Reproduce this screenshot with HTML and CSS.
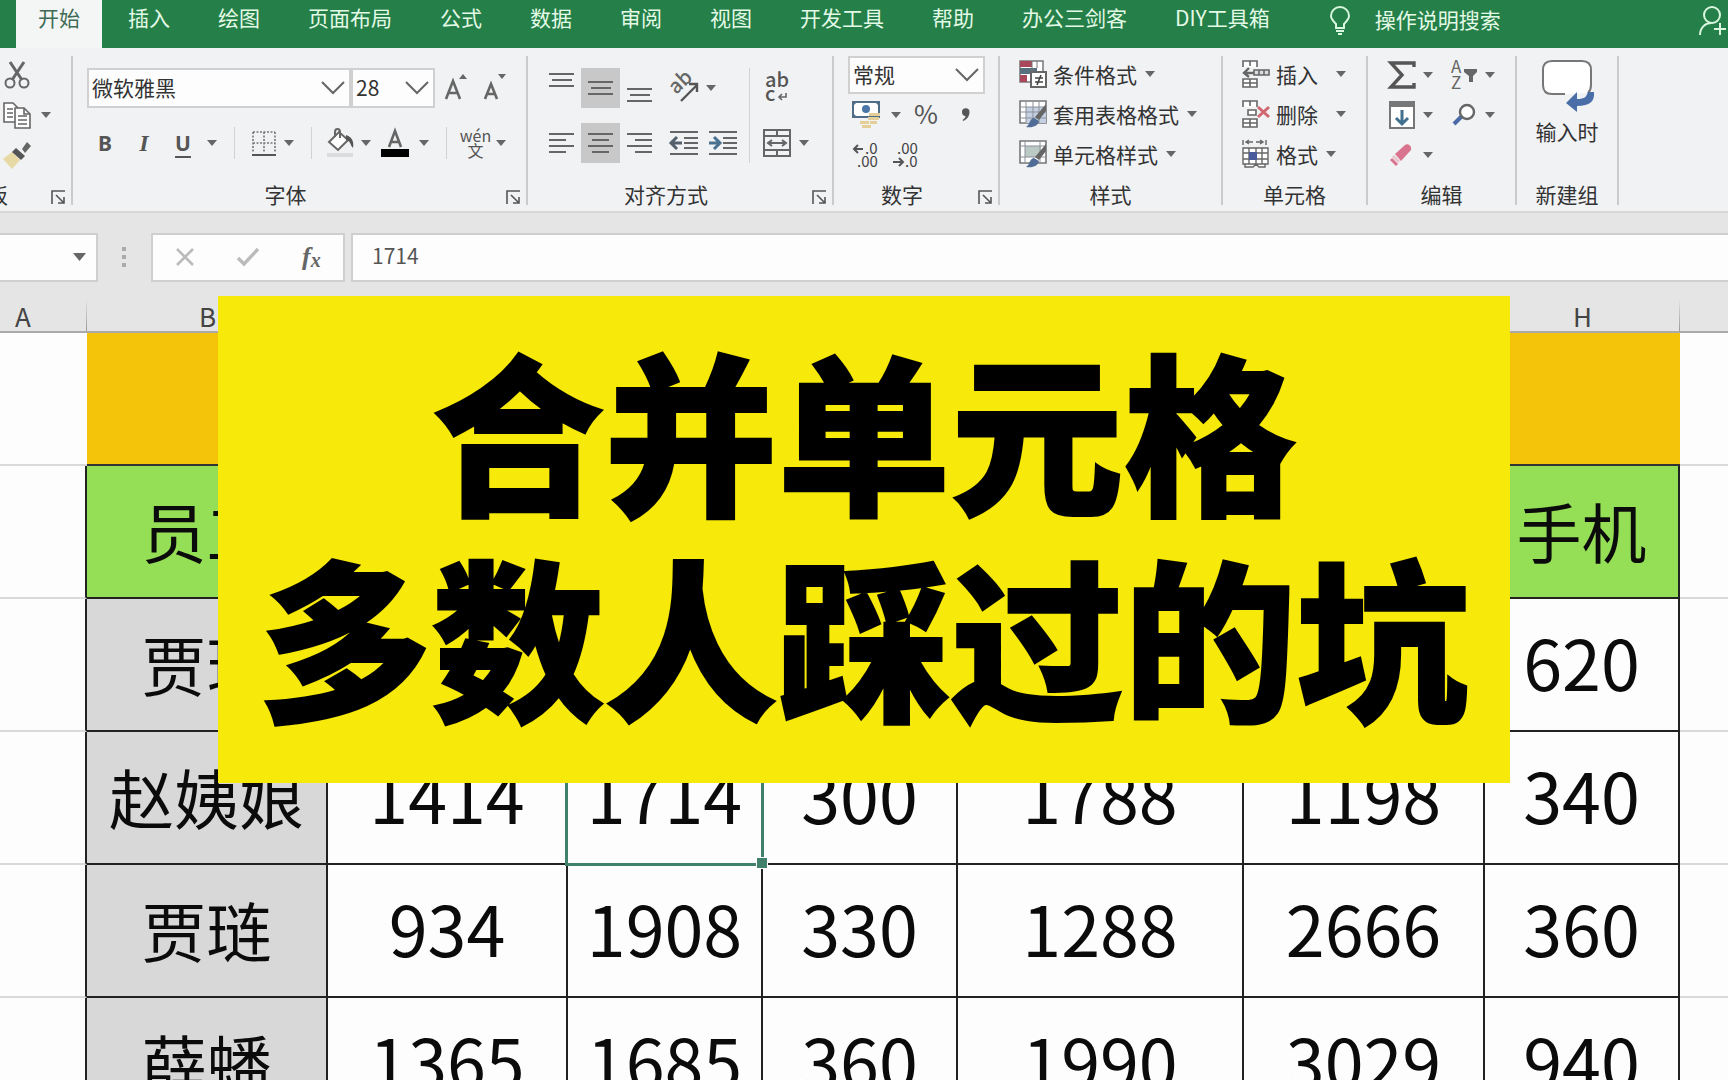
FILE: index.html
```html
<!DOCTYPE html>
<html lang="zh-CN">
<head>
<meta charset="utf-8">
<meta name="viewport" content="width=device-width, initial-scale=1">
<title>合并单元格</title>
<link rel="stylesheet" href="styles.css">
</head>
<body>
<svg class="defs" aria-hidden="true">
  <symbol id="caret" viewBox="0 0 10 6"><path d="M0 0h10L5 6z" fill="#666"/></symbol>
  <symbol id="launch" viewBox="0 0 15 15"><path d="M1 14V1h13M5 5l8 8M13 7v6H7" fill="none" stroke="#555" stroke-width="1.6"/></symbol>
  <symbol id="brush" viewBox="0 0 28 28"><path d="M27 4v7l-7 9-4-3z" fill="#666"/><path d="M15 18l5 3c-1 5-6 7-13 6 4-2 3-8 8-9z" fill="#4f6d96"/></symbol>
</svg>
<div class="app">
  <header class="tabs">
    <nav class="tablist">
      <button class="tab active">开始</button>
      <button class="tab">插入</button>
      <button class="tab">绘图</button>
      <button class="tab">页面布局</button>
      <button class="tab">公式</button>
      <button class="tab">数据</button>
      <button class="tab">审阅</button>
      <button class="tab">视图</button>
      <button class="tab">开发工具</button>
      <button class="tab">帮助</button>
      <button class="tab">办公三剑客</button>
      <button class="tab">DIY工具箱</button>
    </nav>
    <button class="tellme">
      <svg width="22" height="30" viewBox="0 0 22 30" fill="none" stroke="#d9f7df" stroke-width="2"><path d="M7 22v-4C4 15 2 13 2 10a9 9 0 0 1 18 0c0 3-2 5-5 8v4zM7 25h8M9 28h4"/></svg>
      <span>操作说明搜索</span>
    </button>
    <button class="share" aria-label="共享">
      <svg width="30" height="30" viewBox="0 0 30 30" fill="none" stroke="#d9f7df" stroke-width="2"><circle cx="14" cy="9" r="8"/><path d="M2 29c0-7 5-12 11-12M22 17v12M16 23h12"/></svg>
    </button>
  </header>

  <div class="ribbon">
    <section class="group clipboard">
      <div class="body three">
        <div class="row"><button class="ic" aria-label="剪切"><svg width="26" height="28" viewBox="0 0 26 28" fill="none" stroke="#666" stroke-width="2"><path d="M6 1l12 18M20 1L8 19" stroke-width="3"/><circle cx="6" cy="22" r="4.5"/><circle cx="20" cy="22" r="4.5"/></svg></button></div>
        <div class="row"><button class="ic" aria-label="复制"><svg width="28" height="28" viewBox="0 0 28 28" fill="#fff" stroke="#666" stroke-width="1.6"><path d="M1 2h9l5 5v14H1z"/><path d="M4 8h6M4 12h6M4 16h6"/><path d="M12 7h9l6 6v14H12z"/><path d="M21 7v6h6M15 15h9M15 19h9M15 23h9" fill="none"/></svg></button><button class="dd" aria-label="复制选项"><svg><use href="#caret"/></svg></button></div>
        <div class="row"><button class="ic" aria-label="格式刷"><svg width="28" height="28" viewBox="0 0 28 28"><path d="M9 11l8 8-8 9-9-10z" fill="#e6d9a3"/><path d="M13 7l9 8-4 4-9-8z" fill="#555"/><path d="M19 8l5-7 4 4-6 7z" fill="#666"/></svg></button></div>
      </div>
      <div class="foot"><span>剪贴板</span><button class="launch" aria-label="剪贴板设置"><svg><use href="#launch"/></svg></button></div>
    </section>

    <section class="group font">
      <div class="body two">
        <div class="row fields">
          <select class="field family" aria-label="字体"><option>微软雅黑</option></select>
          <select class="field size" aria-label="字号"><option>28</option></select>
          <button class="ic" aria-label="增大字号"><svg width="24" height="28" viewBox="0 0 24 28"><path d="M2 25L9 7l7 18M5 19h8" fill="none" stroke="#666" stroke-width="2.6"/><path d="M15 5h8l-4-5z" fill="#666"/></svg></button>
          <button class="ic" aria-label="减小字号"><svg width="24" height="28" viewBox="0 0 24 28"><path d="M2 25L8 10l6 15M4 20h8" fill="none" stroke="#666" stroke-width="2.6"/><path d="M15 0h8l-4 5z" fill="#666"/></svg></button>
        </div>
        <div class="row">
          <button class="ic glyph bold">B</button>
          <button class="ic glyph italic">I</button>
          <button class="ic glyph under">U</button>
          <button class="dd" aria-label="下划线选项"><svg><use href="#caret"/></svg></button>
          <i class="sep"></i>
          <button class="ic slim" aria-label="边框"><svg width="26" height="26" viewBox="0 0 26 26" fill="none" stroke="#777" stroke-width="1.6"><path d="M2 2h22M2 13h22M2 2v21M13 2v21M24 2v21" stroke-dasharray="2 1.5"/><path d="M1 25h24" stroke="#555" stroke-width="2"/></svg></button>
          <button class="dd" aria-label="边框选项"><svg><use href="#caret"/></svg></button>
          <i class="sep"></i>
          <button class="ic slim" aria-label="填充颜色"><svg width="28" height="30" viewBox="0 0 28 30"><path d="M2 14L12 4l9 8-10 10z" fill="#fff" stroke="#666" stroke-width="2"/><path d="M8 9V4c0-4 5-4 5 0v6" fill="none" stroke="#666" stroke-width="2"/><path d="M19 7c7 2 8 8 7 13-3-3-2-7-7-8z" fill="#555"/><path d="M0 25h26v4H0z" fill="#dcdcdc"/></svg></button>
          <button class="dd" aria-label="填充选项"><svg><use href="#caret"/></svg></button>
          <button class="ic" aria-label="字体颜色"><svg width="30" height="30" viewBox="0 0 30 30"><path d="M9 19L15 3l6 16M11 14h8" fill="none" stroke="#666" stroke-width="2.6"/><path d="M1 21h28v8H1z"/></svg></button>
          <button class="dd" aria-label="颜色选项"><svg><use href="#caret"/></svg></button>
          <i class="sep"></i>
          <button class="ic slim pinyin"><span>wén</span><span>文</span></button>
          <button class="dd" aria-label="拼音选项"><svg><use href="#caret"/></svg></button>
        </div>
      </div>
      <div class="foot"><span>字体</span><button class="launch" aria-label="字体设置"><svg><use href="#launch"/></svg></button></div>
    </section>

    <section class="group align">
      <div class="body split">
        <div class="stack">
          <div class="row">
            <button class="ic" aria-label="顶端对齐"><svg width="26" height="30" viewBox="0 0 26 30" stroke="#666" stroke-width="1.8"><path d="M0 1h25M3 7h20M0 13h25"/></svg></button>
            <button class="ic on" aria-label="垂直居中"><svg width="26" height="16" viewBox="0 0 26 16" stroke="#666" stroke-width="1.8"><path d="M0 2h25M3 8h20M0 14h25"/></svg></button>
            <button class="ic" aria-label="底端对齐"><svg width="26" height="30" viewBox="0 0 26 30" stroke="#666" stroke-width="1.8"><path d="M0 16h25M3 22h20M0 28h25"/></svg></button>
            <button class="ic gap" aria-label="方向"><svg width="32" height="32" viewBox="0 0 32 32"><text x="8" y="23" transform="rotate(-43 8 23)" font-family="Noto Sans CJK SC, sans-serif" font-size="20" font-weight="500" fill="#666">ab</text><path d="M13 29L29 13M21 12l8 0 0 8" fill="none" stroke="#555" stroke-width="2.4"/></svg></button>
            <button class="dd" aria-label="方向选项"><svg><use href="#caret"/></svg></button>
          </div>
          <div class="row">
            <button class="ic" aria-label="左对齐"><svg width="26" height="22" viewBox="0 0 26 22" stroke="#666" stroke-width="1.8"><path d="M0 2h25M0 8h17M0 14h25M0 20h17"/></svg></button>
            <button class="ic on" aria-label="居中"><svg width="26" height="22" viewBox="0 0 26 22" stroke="#666" stroke-width="1.8"><path d="M0 2h25M4 8h17M0 14h25M4 20h17"/></svg></button>
            <button class="ic" aria-label="右对齐"><svg width="26" height="22" viewBox="0 0 26 22" stroke="#666" stroke-width="1.8"><path d="M0 2h25M8 8h17M0 14h25M8 20h17"/></svg></button>
            <button class="ic gap" aria-label="减少缩进"><svg width="30" height="26" viewBox="0 0 30 26" fill="none" stroke="#666" stroke-width="1.8"><path d="M1 2h28M15 8h14M15 13h14M15 18h14M1 24h28"/><path d="M13 13H3M8 7l-6 6 6 6" stroke="#55606c" stroke-width="3"/></svg></button>
            <button class="ic" aria-label="增加缩进"><svg width="30" height="26" viewBox="0 0 30 26" fill="none" stroke="#666" stroke-width="1.8"><path d="M1 2h28M15 8h14M15 13h14M15 18h14M1 24h28"/><path d="M1 13h10M6 7l6 6-6 6" stroke="#4a718f" stroke-width="3"/></svg></button>
          </div>
        </div>
        <i class="sep tall"></i>
        <div class="stack">
          <div class="row"><button class="ic" aria-label="自动换行"><svg width="26" height="32" viewBox="0 0 26 32"><text x="1" y="15" font-family="Noto Sans CJK SC, sans-serif" font-size="20" font-weight="500" fill="#555">ab</text><text x="1" y="29" font-family="Noto Sans CJK SC, sans-serif" font-size="20" font-weight="500" fill="#555">c</text><path d="M22 21v4h-7M18 22l-3 3 3 3" fill="none" stroke="#666" stroke-width="1.6"/></svg></button></div>
          <div class="row"><button class="ic" aria-label="合并后居中"><svg width="28" height="28" viewBox="0 0 28 28" fill="none" stroke="#666" stroke-width="2"><path d="M1 1h26v26H1zM1 7h26M1 21h26M14 1v6M14 21v6M5 14h18M9 11l-4 3 4 3M19 11l4 3-4 3"/></svg></button><button class="dd" aria-label="合并选项"><svg><use href="#caret"/></svg></button></div>
        </div>
      </div>
      <div class="foot"><span>对齐方式</span><button class="launch" aria-label="对齐设置"><svg><use href="#launch"/></svg></button></div>
    </section>

    <section class="group number">
      <div class="body three">
        <div class="row"><select class="field format" aria-label="数字格式"><option>常规</option></select></div>
        <div class="row">
          <button class="ic" aria-label="会计数字格式"><svg width="30" height="28" viewBox="0 0 30 28"><path d="M2 1h26v15H2z" fill="#fff" stroke="#4f6d86" stroke-width="2"/><path d="M1 0h6L1 6zM29 0v6l-6-6zM1 17v-6l6 6z" fill="#4f6d86"/><circle cx="15" cy="8" r="4" fill="#4a76a8"/><path d="M18 12h11v3H18zM17 16h11v3H17zM9 20h9v3H9zM11 24h9v3h-9zM19 20h7v3h-7z" fill="#e3cf97"/></svg></button>
          <button class="dd" aria-label="货币选项"><svg><use href="#caret"/></svg></button>
          <button class="ic pct">%</button>
          <button class="ic" aria-label="千位分隔样式"><svg width="10" height="14" viewBox="0 0 10 14"><path d="M1 4a3.500 3.500 0 0 1 7.500 0c0 4-2 7-6 9l-1-1c2-1 3-3 3-4C2 8 1 6 1 4z" fill="#555"/></svg></button>
        </div>
        <div class="row">
          <button class="ic" aria-label="增加小数位数"><svg width="30" height="26" viewBox="0 0 30 26" font-family="Noto Sans CJK SC, sans-serif" font-size="15" fill="#444"><text x="14" y="12">.0</text><text x="6" y="25">.00</text><path d="M12 7H3M7 3L3 7l4 4" fill="none" stroke="#555" stroke-width="2"/></svg></button>
          <button class="ic" aria-label="减少小数位数"><svg width="30" height="26" viewBox="0 0 30 26" font-family="Noto Sans CJK SC, sans-serif" font-size="15" fill="#444"><text x="6" y="12">.00</text><text x="14" y="25">.0</text><path d="M2 20h10M8 16l4 4-4 4" fill="none" stroke="#555" stroke-width="2"/></svg></button>
        </div>
      </div>
      <div class="foot"><span>数字</span><button class="launch" aria-label="数字设置"><svg><use href="#launch"/></svg></button></div>
    </section>

    <section class="group styles">
      <div class="body three">
        <button class="cmd"><svg class="icon" width="28" height="28" viewBox="0 0 28 28"><path d="M1 1h23v21H1z" fill="#fff" stroke="#777" stroke-width="1.5"/><path d="M1 1h12v6H1zM1 15h7v7H1z" fill="#a8485a"/><path d="M1 8h17v6H1z" fill="#56707f"/><path d="M13 1v13M18 1v7" stroke="#777"/><path d="M12 12h15v15H12z" fill="#fff" stroke="#666" stroke-width="2"/><path d="M16 18h8M16 22h8M22 15l-4 10" stroke="#444" stroke-width="1.6"/></svg>条件格式<svg class="caret"><use href="#caret"/></svg></button>
        <button class="cmd"><svg class="icon" width="28" height="28" viewBox="0 0 28 28"><path d="M1 1h26v22H1z" fill="#fff" stroke="#777" stroke-width="1.6"/><path d="M7 7h20v16H7z" fill="#c5d0e4"/><path d="M7 1v22M14 1v22M20 1v22M1 7h26M1 12h26M1 18h26" stroke="#8b8f98"/><use href="#brush"/></svg>套用表格格式<svg class="caret"><use href="#caret"/></svg></button>
        <button class="cmd"><svg class="icon" width="28" height="28" viewBox="0 0 28 28"><path d="M1 1h26v22H1z" fill="#fff" stroke="#777" stroke-width="1.6"/><path d="M6 6h16v11H6z" fill="#bccac6"/><path d="M6 1v22M1 6h26M1 17h26M21 1v22" stroke="#8b8f98"/><use href="#brush"/></svg>单元格样式<svg class="caret"><use href="#caret"/></svg></button>
      </div>
      <div class="foot"><span>样式</span></div>
    </section>

    <section class="group cells">
      <div class="body three">
        <button class="cmd wide"><svg class="icon" width="28" height="28" viewBox="0 0 28 28" fill="#fff" stroke="#666" stroke-width="1.6"><path d="M1 7V1h14v6M8 1v5M1 19h14v8H1zM8 19v8M1 23h14"/><path d="M12 10h15v5H12zM17 10v5M22 10v5" fill="#ddd"/><path d="M12 13H3M7 8l-5 5 5 4" fill="none" stroke-width="2.4"/></svg>插入<svg class="caret"><use href="#caret"/></svg></button>
        <button class="cmd wide"><svg class="icon" width="28" height="28" viewBox="0 0 28 28" fill="#fff" stroke="#666" stroke-width="1.6"><path d="M1 7V1h14v6M8 1v5M1 19h14v8H1zM8 19v8M1 23h14M6 10h8v5H6z"/><path d="M16 7l11 10M27 7L16 17" stroke="#cf6870" stroke-width="3"/></svg>删除<svg class="caret"><use href="#caret"/></svg></button>
        <button class="cmd"><svg class="icon" width="28" height="28" viewBox="0 0 28 28" fill="none" stroke="#666" stroke-width="1.4"><path d="M1 0v5M24 0v5M5 2h6M14 2h6M7 0L4 2l3 2M18 0l3 2-3 2"/><path d="M1 8h25v16H1zM1 13h25M1 19h25M7 8v16M14 8v16M20 8v16M3 24v3h8l3-3 3 3h6v-3" fill="#fff"/><path d="M7 12h8v8H7z" fill="#4a5c9c" stroke="none"/></svg>格式<svg class="caret"><use href="#caret"/></svg></button>
      </div>
      <div class="foot"><span>单元格</span></div>
    </section>

    <section class="group edit">
      <div class="body three">
        <div class="row">
          <button class="ic" aria-label="自动求和"><svg width="28" height="28" viewBox="0 0 28 28"><path d="M26 6V2H3l11 12L3 26h23v-4" fill="none" stroke="#555" stroke-width="3.400"/></svg></button><button class="dd" aria-label="求和选项"><svg><use href="#caret"/></svg></button>
          <button class="ic gap" aria-label="排序和筛选"><svg width="28" height="30" viewBox="0 0 28 30" font-family="Noto Sans CJK SC, sans-serif" font-size="17" fill="#666"><text x="1" y="13">A</text><text x="1" y="29">Z</text><path d="M14 9h13v3l-4 4v6h-4v-6l-5-4z"/></svg></button><button class="dd" aria-label="排序选项"><svg><use href="#caret"/></svg></button>
        </div>
        <div class="row">
          <button class="ic" aria-label="填充"><svg width="26" height="28" viewBox="0 0 26 28"><path d="M1 1h24v26H1z" fill="#fff" stroke="#777" stroke-width="2"/><path d="M0 0h26v6H0z" fill="#777"/><path d="M13 9v14M7 17l6 6 6-6" fill="none" stroke="#426f8d" stroke-width="3"/></svg></button><button class="dd" aria-label="填充选项"><svg><use href="#caret"/></svg></button>
          <button class="ic gap" aria-label="查找和选择"><svg width="26" height="24" viewBox="0 0 26 24" fill="none"><path d="M11 13l-8 8" stroke="#4a6aa8" stroke-width="4"/><circle cx="16" cy="9" r="7" fill="#fff" stroke="#666" stroke-width="2.400"/></svg></button><button class="dd" aria-label="查找选项"><svg><use href="#caret"/></svg></button>
        </div>
        <div class="row">
          <button class="ic" aria-label="清除"><svg width="26" height="24" viewBox="0 0 26 24"><path d="M6 11L16 2c3-2 7 1 6 5l-10 11z" fill="#d9748f"/><path d="M4 13l6 6" stroke="#e9c6cf" stroke-width="3"/><path d="M2 16l6 6" stroke="#d9748f" stroke-width="3"/></svg></button><button class="dd" aria-label="清除选项"><svg><use href="#caret"/></svg></button>
        </div>
      </div>
      <div class="foot"><span>编辑</span></div>
    </section>

    <section class="group custom">
      <div class="body">
        <button class="big"><svg width="56" height="54" viewBox="0 0 56 54"><path d="M26 35H13c-6 0-9-3-9-9V11c0-6 3-9 9-9h30c6 0 9 3 9 9v15c0 4-1 6-3 8" fill="#fff" stroke="#777" stroke-width="2"/><path d="M27 44l11-11v7c8 0 9-2 11-7h6c1 9-4 14-17 14v6z" fill="#4a6ea8"/></svg><span>输入时</span></button>
      </div>
      <div class="foot"><span>新建组</span></div>
    </section>
  </div>

  <div class="formula">
    <button class="namebox" aria-label="名称框"><svg><use href="#caret"/></svg></button>
    <svg class="dots" width="4" height="20" viewBox="0 0 4 20" fill="#aaa"><path d="M0 0h4v4H0zM0 8h4v4H0zM0 16h4v4H0z"/></svg>
    <div class="fx">
      <button aria-label="取消"><svg width="20" height="20" viewBox="0 0 20 20"><path d="M2 2l16 16M18 2L2 18" stroke="#bbb" stroke-width="2.600"/></svg></button>
      <button aria-label="输入"><svg width="24" height="20" viewBox="0 0 24 20"><path d="M2 11l6 6L22 2" fill="none" stroke="#bbb" stroke-width="3.400"/></svg></button>
      <button class="fn"><i>f</i><i class="sub">x</i></button>
    </div>
    <input class="value" aria-label="编辑栏" value="1714">
  </div>

  <main class="sheet">
    <table class="grid">
      <colgroup><col class="ca"><col class="c241"><col class="c240"><col class="c195"><col class="c195"><col class="c286"><col class="c241"><col class="c195"><col></colgroup>
      <thead><tr><th>A</th><th>B</th><th></th><th></th><th></th><th></th><th></th><th>H</th><th class="end"></th></tr></thead>
      <tbody>
        <tr><td></td><td class="title" colspan="7"></td><td></td></tr>
        <tr class="head"><td></td><td class="b name">员工</td><td class="b"></td><td class="b"></td><td class="b"></td><td class="b"></td><td class="b"></td><td class="b">手机</td><td></td></tr>
        <tr><td></td><td class="b name">贾珍</td><td class="b n"></td><td class="b n"></td><td class="b n"></td><td class="b n"></td><td class="b n"></td><td class="b n">620</td><td></td></tr>
        <tr><td></td><td class="b name">赵姨娘</td><td class="b n">1414</td><td class="b n selected">1714</td><td class="b n">300</td><td class="b n">1788</td><td class="b n">1198</td><td class="b n">340</td><td></td></tr>
        <tr><td></td><td class="b name">贾琏</td><td class="b n">934</td><td class="b n">1908</td><td class="b n">330</td><td class="b n">1288</td><td class="b n">2666</td><td class="b n">360</td><td></td></tr>
        <tr><td></td><td class="b name">薛蟠</td><td class="b n">1365</td><td class="b n">1685</td><td class="b n">360</td><td class="b n">1990</td><td class="b n">3029</td><td class="b n">940</td><td></td></tr>
      </tbody>
    </table>
  </main>

  <h1 class="banner"><span>合并单元格</span><span>多数人踩过的坑</span></h1>
</div>
</body>
</html>
```
FILE: styles.css
```css
* { box-sizing: border-box; }
body {
  margin: 0;
  font-family: "Noto Sans CJK SC", "Noto Sans", sans-serif;
  font-size: 21px;
  line-height: 24px;
  color: #333;
  background: #fdfdfd;
}
button, select, input { font: inherit; color: inherit; border: 0; padding: 0; margin: 0; background: none; }
svg { display: block; flex: none; overflow: visible; }
.defs { display: none; }
.app { position: relative; display: flex; flex-direction: column; height: 100vh; overflow: hidden; }

/* tab strip */
.tabs { display: flex; flex: none; height: 48px; padding-left: 16px; background: #257f48; color: #e3fae7; overflow: hidden; }
.tablist { display: flex; gap: 4px; }
.tab { padding: 0 22px 14px; white-space: nowrap; }
.tab.active { background: #f3f6f5; color: #3f6b55; }
.tellme { display: flex; align-items: center; gap: 24px; margin-left: 37px; padding-bottom: 6px; white-space: nowrap; }
.tellme span { padding-bottom: 4px; }
.share { margin-left: auto; padding-bottom: 6px; }

/* ribbon */
.ribbon { display: flex; flex: none; height: 165px; padding: 8px 0 6px; background: #f1f2f3; border-bottom: 2px solid #d6d6d6; overflow: hidden; }
.group { display: flex; flex: none; flex-direction: column; border-right: 2px solid #cbcbcb; }
.body { height: 128px; }
.foot { display: flex; height: 22px; align-items: center; line-height: 22px; }
.foot span { flex: 1; text-align: center; white-space: nowrap; }
.launch { width: 28px; padding-left: 8px; padding-top: 6px; }
.launch svg { width: 15px; height: 15px; }
.clipboard { width: 163px; margin-left: -90px; }
.font { width: 455px; }
.align { width: 306px; }
.number { width: 166px; }
.styles { width: 223px; }
.cells { width: 145px; }
.edit { width: 149px; }
.custom { width: 102px; }

.row { display: flex; align-items: center; height: 38px; }
.three { display: flex; flex-direction: column; gap: 2px; }
.two, .stack { display: flex; flex-direction: column; gap: 15px; }
.two, .split { padding-top: 12px; }
.two .row, .stack .row { height: 40px; }
.split { display: flex; }
.clipboard .body { padding-left: 89px; }
.clipboard .row { gap: 3px; }
.font .body { padding-left: 14px; }
.font .row { gap: 3px; }
.align .body { padding-left: 14px; }
.number .body { padding-left: 14px; }
.number .row { gap: 4px; }
.styles .body { padding-left: 19px; }
.cells .body { padding-left: 19px; }
.edit .body { padding-left: 16px; }

.ic { display: flex; width: 36px; height: 38px; align-items: center; justify-content: center; }
.slim { width: 29px; }
.align .ic { width: 39px; height: 40px; }
.align .gap { margin-left: 5px; }
.edit .gap { margin-left: 10px; }
.on { background: #c8c8c8; }
.dd { display: flex; width: 16px; height: 38px; align-items: center; justify-content: center; }
.dd svg, .caret, .namebox svg { width: 10px; height: 6px; }
.sep { flex: none; width: 1px; height: 32px; margin: 0 11px; background: #d2d2d2; }
.sep.tall { height: 95px; margin: 0 7px; }
.glyph { font-family: "Noto Sans", sans-serif; font-weight: 700; color: #555; }
.italic { font-family: "Liberation Serif", serif; font-size: 24px; font-style: italic; }
.under { text-decoration: underline; text-underline-offset: 5px; text-decoration-thickness: 2px; }
.pinyin { flex-direction: column; font-size: 16px; line-height: 15px; color: #555; }
.pct { font-size: 26px; padding-bottom: 4px; color: #555; }

.field {
  height: 40px;
  padding-left: 3px;
  padding-bottom: 3px;
  border: 2px solid #d0d0d0;
  appearance: none;
  color: #333;
  background: #fdfdfd url("data:image/svg+xml,%3Csvg xmlns='http://www.w3.org/2000/svg' width='24' height='14'%3E%3Cpath d='M1 1l11 11L23 1' fill='none' stroke='%23666' stroke-width='2'/%3E%3C/svg%3E") no-repeat right 4px center;
}
.fields .field + .field { margin-left: -3px; }
.family { width: 264px; }
.size { width: 84px; }
.format { width: 137px; height: 38px; }

.cmd { display: flex; height: 38px; align-items: center; padding-bottom: 3px; white-space: nowrap; }
.cmd .icon { margin-right: 6px; }
.cmd .caret { margin-left: 8px; }
.cmd.wide .caret { margin-left: 18px; }
.big { display: flex; width: 100%; flex-direction: column; align-items: center; gap: 6px; padding-top: 3px; }

/* formula bar */
.formula { display: flex; flex: none; align-items: center; height: 69px; padding-top: 19px; background: #e5e5e5; }
.namebox, .fx, .value { height: 49px; background: #fdfdfd; border: 2px solid #cfcfcf; }
.namebox { display: flex; width: 98px; align-items: center; justify-content: flex-end; padding-right: 10px; border-left: 0; }
.namebox svg { width: 13px; height: 8px; }
.dots { margin: 0 25px 0 24px; }
.fx { display: flex; width: 194px; margin-right: 6px; }
.fx button { display: flex; flex: 1; align-items: center; justify-content: center; }
.fn { font-family: "Liberation Serif", serif; font-size: 26px; font-weight: 700; color: #666; }
.fn .sub { font-size: 20px; padding-top: 6px; }
.value { flex: 1; min-width: 0; padding-left: 19px; padding-bottom: 4px; border-right: 0; color: #555; }

/* worksheet */
.sheet { flex: 1; min-height: 0; overflow: hidden; }
.grid { width: calc(100% + 41px); margin-left: -41px; table-layout: fixed; border-collapse: separate; border-spacing: 0; color: #0b0b0b; }
.ca { width: 128px; }
.c241 { width: 241px; }
.c240 { width: 240px; }
.c195 { width: 195px; }
.c286 { width: 286px; }
.grid th {
  height: 51px;
  padding: 19px 0 0;
  font-size: 26px;
  line-height: 30px;
  font-weight: 400;
  color: #444;
  border-bottom: 2px solid #aaa;
  background: linear-gradient(transparent 35%, #999) no-repeat right / 1px 100% #e5e5e5;
}
.grid th.end { background: #e5e5e5; }
.grid td { height: 133px; padding: 0; font-size: 65px; line-height: 80px; text-align: center; white-space: nowrap; border-bottom: 2px solid #d9d9d9; }
.grid td:first-child { border-right: 2px solid #222; }
.grid tr:first-child td:first-child { border-right: 0; }
.grid .title { background: #f4c40b; border-bottom-color: #333; }
.grid .b { padding-bottom: 4px; border-right: 2px solid #222; border-bottom: 2px solid #222; }
.grid .name { background: #d8d8d8; }
.grid .head .b { background: #95df57; }
.grid .n { padding-bottom: 8px; font-size: 70px; }
.selected { position: relative; }
.selected::before { content: ""; position: absolute; inset: -3px; border: 3px solid #41806a; }
.selected::after { content: ""; position: absolute; right: -7px; bottom: -6px; width: 10px; height: 10px; background: #41806a; border: 1px solid #fff; }

/* headline laid over the sheet */
.banner {
  position: absolute;
  top: 296px;
  left: 218px;
  right: 218px;
  display: flex;
  flex-direction: column;
  align-items: center;
  margin: 0;
  padding: 28px 0 47px;
  background: #f7e90a;
  color: #000;
  font-size: 173px;
  line-height: 206px;
  font-weight: 900;
  white-space: nowrap;
  -webkit-text-stroke: 2px #000;
}
```
